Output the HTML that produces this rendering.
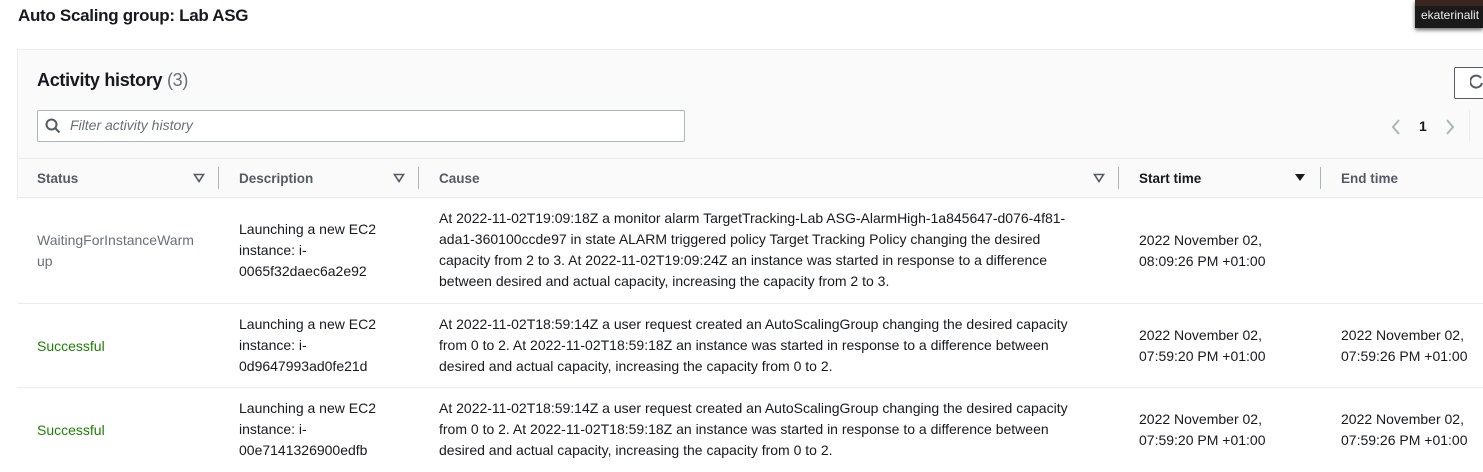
<!DOCTYPE html>
<html><head><style>
body{margin:0;width:1483px;height:472px;overflow:hidden;background:#fff;font-family:"Liberation Sans",sans-serif;color:#16191f;position:relative}
.a{position:absolute;white-space:nowrap}
.t{font-size:14px;line-height:21px}
.h{font-size:13.5px;font-weight:bold;color:#545b64}
.sep{position:absolute;width:1px;height:22px;background:#aab7b8;top:167px}
.tri{position:absolute;top:174px;width:0;height:0;border-left:5px solid transparent;border-right:5px solid transparent;border-top:7px solid #545b64}
.line{position:absolute;left:17px;right:0;height:1px;background:#eaeded}
.ot{position:absolute;top:173px}
</style></head><body>
<div class="a" style="left:18px;top:6px;font-size:17px;font-weight:bold;letter-spacing:-0.3px">Auto Scaling group: Lab ASG</div>
<div style="position:absolute;left:17px;top:49px;right:0;height:149px;background:#fafafa;border-top:1px solid #eaeded;border-left:1px solid #eaeded"></div>
<div class="a" style="left:37px;top:70px;font-size:18px;font-weight:bold;letter-spacing:-0.3px">Activity history <span style="font-weight:normal;color:#687078">(3)</span></div>
<div style="position:absolute;left:37px;top:110px;width:646px;height:30px;border:1px solid #aab7b8;border-radius:2px;background:#fff"></div>
<svg style="position:absolute;left:45px;top:118px" width="16" height="16" viewBox="0 0 16 16"><circle cx="6.5" cy="6.5" r="5" fill="none" stroke="#545b64" stroke-width="2"/><path d="M10 10l4.5 4.5" stroke="#545b64" stroke-width="2"/></svg>
<div class="a" style="left:70px;top:117px;font-size:14px;font-style:italic;color:#687078">Filter activity history</div>
<div style="position:absolute;left:1454px;top:67px;width:40px;height:30px;border:1px solid #545b64;border-radius:2px;background:#fff"></div>
<svg style="position:absolute;left:1470px;top:74px" width="14" height="16"><path d="M11 4A6 6 0 1 0 12 9" fill="none" stroke="#545b64" stroke-width="2"/></svg>
<svg style="position:absolute;left:1390px;top:118px" width="12" height="18"><path d="M9 2L3 9l6 7" fill="none" stroke="#aab7b8" stroke-width="2"/></svg>
<div class="a" style="left:1419px;top:118px;font-size:14px;font-weight:bold">1</div>
<svg style="position:absolute;left:1444px;top:118px" width="12" height="18"><path d="M3 2l6 7-6 7" fill="none" stroke="#aab7b8" stroke-width="2"/></svg>
<div style="position:absolute;left:1469px;top:110px;width:1px;height:32px;background:#eaeded"></div>
<div class="line" style="top:158px"></div>
<div class="line" style="top:197px"></div>
<div class="a h" style="left:37px;top:171px">Status</div>
<svg class="ot" style="left:193px" width="12" height="10"><path d="M1.5 1.5h9L6 8.5z" fill="none" stroke="#545b64" stroke-width="1.6"/></svg><div class="sep" style="left:218px"></div>
<div class="a h" style="left:239px;top:171px">Description</div>
<svg class="ot" style="left:393px" width="12" height="10"><path d="M1.5 1.5h9L6 8.5z" fill="none" stroke="#545b64" stroke-width="1.6"/></svg><div class="sep" style="left:418px"></div>
<div class="a h" style="left:439px;top:171px">Cause</div>
<svg class="ot" style="left:1093px" width="12" height="10"><path d="M1.5 1.5h9L6 8.5z" fill="none" stroke="#545b64" stroke-width="1.6"/></svg><div class="sep" style="left:1118px"></div>
<div class="a h" style="left:1139px;top:171px;color:#16191f">Start time</div>
<div class="tri" style="left:1295px;border-top-color:#16191f"></div><div class="sep" style="left:1320px"></div>
<div class="a h" style="left:1341px;top:171px">End time</div>
<div class="line" style="top:303px"></div>
<div class="line" style="top:387px"></div>

<div class="a t" style="left:37px;top:230px;color:#687078">WaitingForInstanceWarm<br>up</div>
<div class="a t" style="left:239px;top:219px">Launching a new EC2<br>instance: i-<br>0065f32daec6a2e92</div>
<div class="a t" style="left:439px;top:208px">At 2022-11-02T19:09:18Z a monitor alarm TargetTracking-Lab ASG-AlarmHigh-1a845647-d076-4f81-<br>ada1-360100ccde97 in state ALARM triggered policy Target Tracking Policy changing the desired<br>capacity from 2 to 3. At 2022-11-02T19:09:24Z an instance was started in response to a difference<br>between desired and actual capacity, increasing the capacity from 2 to 3.</div>
<div class="a t" style="left:1139px;top:230px">2022 November 02,<br>08:09:26 PM +01:00</div>

<div class="a t" style="left:37px;top:336px;color:#1d8102">Successful</div>
<div class="a t" style="left:239px;top:314px">Launching a new EC2<br>instance: i-<br>0d9647993ad0fe21d</div>
<div class="a t" style="left:439px;top:314px">At 2022-11-02T18:59:14Z a user request created an AutoScalingGroup changing the desired capacity<br>from 0 to 2. At 2022-11-02T18:59:18Z an instance was started in response to a difference between<br>desired and actual capacity, increasing the capacity from 0 to 2.</div>
<div class="a t" style="left:1139px;top:325px">2022 November 02,<br>07:59:20 PM +01:00</div>
<div class="a t" style="left:1341px;top:325px">2022 November 02,<br>07:59:26 PM +01:00</div>

<div class="a t" style="left:37px;top:420px;color:#1d8102">Successful</div>
<div class="a t" style="left:239px;top:398px">Launching a new EC2<br>instance: i-<br>00e7141326900edfb</div>
<div class="a t" style="left:439px;top:398px">At 2022-11-02T18:59:14Z a user request created an AutoScalingGroup changing the desired capacity<br>from 0 to 2. At 2022-11-02T18:59:18Z an instance was started in response to a difference between<br>desired and actual capacity, increasing the capacity from 0 to 2.</div>
<div class="a t" style="left:1139px;top:409px">2022 November 02,<br>07:59:20 PM +01:00</div>
<div class="a t" style="left:1341px;top:409px">2022 November 02,<br>07:59:26 PM +01:00</div>

<div style="position:absolute;left:1415px;top:0;width:68px;height:28px;background:#1a1a1a;box-shadow:0 2px 4px rgba(0,0,0,.6)"><div style="height:6px;background:#3a2520"></div><div class="a" style="left:6px;top:8px;font-size:12px;color:#eee">ekaterinalit</div></div>
</body></html>
